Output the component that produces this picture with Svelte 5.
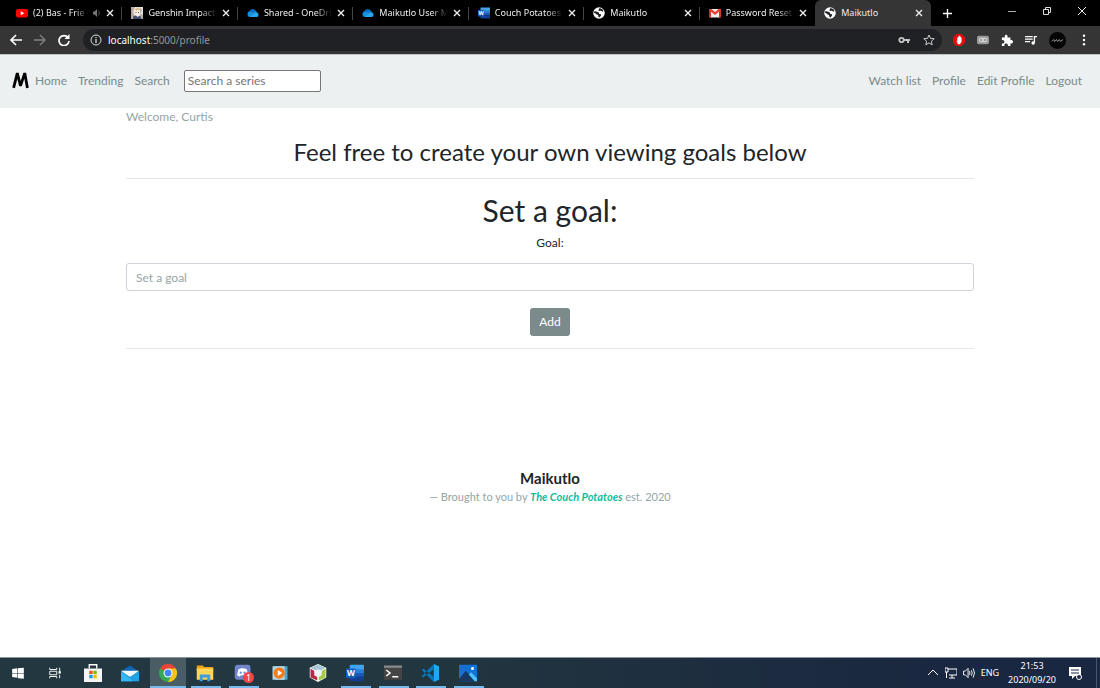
<script>
  const tabs = [
    { icon: 'youtube', title: '(2) Bas - Frie', audio: true },
    { icon: 'genshin', title: 'Genshin Impact-' },
    { icon: 'cloud', title: 'Shared - OneDri' },
    { icon: 'cloud', title: 'Maikutlo User M' },
    { icon: 'word', title: 'Couch Potatoes' },
    { icon: 'globe', title: 'Maikutlo' },
    { icon: 'gmail', title: 'Password Reset' },
    { icon: 'globe', title: 'Maikutlo', active: true }
  ];
  const apps = [
    { icon: 'start', name: 'Start' },
    { icon: 'taskview', name: 'Task View' },
    { icon: 'store', name: 'Store' },
    { icon: 'mail', name: 'Mail' },
    { icon: 'chrome', name: 'Chrome', running: true, active: true },
    { icon: 'folder', name: 'File Explorer', running: true },
    { icon: 'discord', name: 'Discord', running: true },
    { icon: 'player', name: 'Media Player' },
    { icon: 'cube', name: 'NetBeans' },
    { icon: 'word', name: 'Word', running: true },
    { icon: 'terminal', name: 'Terminal', running: true },
    { icon: 'code', name: 'Visual Studio Code', running: true },
    { icon: 'photos', name: 'Photos', running: true }
  ];
  let search = $state('');
  let goal = $state('');
</script>

{#snippet glyph(name)}
  <svg class="glyph" viewBox="0 0 24 24" aria-hidden="true">
    {#if name === 'youtube'}
      <rect x="0" y="4" width="24" height="17" rx="4" fill="#f00" />
      <path d="M9.5 8.5v8l7-4z" fill="#fff" />
    {:else if name === 'genshin'}
      <rect width="24" height="24" fill="#e9e2da" />
      <path d="M0 0h8L4 9l3 9-3 6H0zM17 1l5 5-3 7 5 3v8h-7l2-6z" fill="#b9aaa2" />
      <path d="M7 7l5-3 6 4-1 8-5 3-5-5z" fill="#fff4e7" />
      <path d="M5 18l5-1 3 3 5-3 3 7H4z" fill="#424d70" />
      <path d="M9 10h2v2H9zM14 10h2v2h-2z" fill="#51455c" />
      <path d="M8 5l6-4 5 5-5-1-3 3z" fill="#d9b783" />
    {:else if name === 'cloud'}
      <path d="M4 17a5 5 0 0 1 1-9 7 7 0 0 1 12-1l1 10z" fill="#0364b8" />
      <path d="M9 10l7-3a5 5 0 0 1 4 4l-8 4z" fill="#0f7bd0" />
      <path d="M5 20a5 5 0 0 1-2-9 6 6 0 0 1 8 0l10 7-3 2z" fill="#1490df" />
      <path d="M6 20l10-9a5 5 0 0 1 7 5 4 4 0 0 1-4 4z" fill="#28a8ea" />
    {:else if name === 'word'}
      <path d="M6 1h17a1 1 0 0 1 1 1v6H5V2z" fill="#41a5ee" />
      <path d="M5 7h19v5H5z" fill="#2b7cd3" />
      <path d="M5 12h19v5H5z" fill="#185abd" />
      <path d="M5 17h19v5a1 1 0 0 1-1 1H6a1 1 0 0 1-1-1z" fill="#103f91" />
      <rect x="0" y="6" width="13" height="13" rx="1" fill="#185abd" />
      <text x="6.5" y="16" text-anchor="middle" class="wordmark">W</text>
    {:else if name === 'globe'}
      <circle cx="12" cy="12" r="11.500" fill="#fff" />
      <path d="M3 8c3 0 4 2 7 2 3 1 1 3 3 4 2 0 4 0 3 3l-3 4c-3 0-2-3-3-5-1-1-4-1-5-3-1-1-2-1-3-1zM12 3c3-1 7 1 9 5-2 2-3 1-4 0-2-1-5 1-6-1-1-1 1-1 1-4z" fill="#202124" />
    {:else if name === 'gmail'}
      <path d="M2 4h20v17H2z" fill="#eee" />
      <path d="M0 4h4v17H0zM20 4h4v17h-4z" fill="#d93025" />
      <path d="M1 4h4l7 6 7-6h4v3l-11 9L1 7z" fill="#ea4335" />
    {:else if name === 'start'}
      <path d="M2 5l9-1v8H2zM12 4l10-1v9H12zM2 13h9v7l-9-1zM12 13h10v9l-10-1z" fill="#fff" />
    {:else if name === 'taskview'}
      <path d="M3 3v3h12V3M3 21v-3h12v3M3 9h12v6H3zM20 3v7M20 15v6" fill="none" stroke="#fff" stroke-width="1.6" />
      <path d="M18 9h4v4h-4z" fill="#fff" />
    {:else if name === 'store'}
      <path d="M7 6V1h10v5" fill="none" stroke="#fff" stroke-width="1.8" />
      <path d="M0 6h24v18H0z" fill="#f5f5f5" />
      <path d="M7 9h4.500v4.500H7z" fill="#f25022" /><path d="M12.500 9H17v4.500h-4.500z" fill="#7fba00" />
      <path d="M7 14.500h4.500V19H7z" fill="#00a4ef" /><path d="M12.500 14.500H17V19h-4.500z" fill="#ffb900" />
    {:else if name === 'mail'}
      <path d="M0 10L12 2l12 8v13H0z" fill="#1066b5" />
      <path d="M0 9h24l-12 9z" fill="#f2f8fc" />
      <path d="M0 10l12 7 12-7v13H0z" fill="#249fe3" /><path d="M0 10l16 13H0z" fill="#35b8f1" />
    {:else if name === 'chrome'}
      <circle cx="12" cy="12" r="12" fill="#34a853" />
      <path d="M12 12L1.600 6A12 12 0 0 1 22.400 6z" fill="#ea4335" />
      <path d="M12 6h10.400A12 12 0 0 1 12 24l5-9z" fill="#fbc116" />
      <circle cx="12" cy="12" r="6" fill="#fff" /><circle cx="12" cy="12" r="4.600" fill="#4285f4" />
    {:else if name === 'folder'}
      <path d="M1 2h8l2 2h12v5H1z" fill="#e8a317" />
      <path d="M1 6h22v15H1z" fill="#ffd65c" />
      <path d="M5 23v-9h14v9h-4v-5H9v5z" fill="#3e9ddd" />
    {:else if name === 'discord'}
      <rect x="1" y="1" width="21" height="20" rx="4" fill="#7185c8" />
      <path d="M6 7q5-3 11 0l2 8-4 2-1-2H9l-1 2-4-2z" fill="#fff" />
      <circle cx="9" cy="11.500" r="1.500" fill="#7185c8" /><circle cx="14" cy="11.500" r="1.500" fill="#7185c8" />
    {:else if name === 'player'}
      <path d="M8 3h14v18H8z" fill="#4fa2ca" /><path d="M5 3h13v18H5z" fill="#78bad5" />
      <path d="M2 3h16v18H2z" fill="#b7d6e2" />
      <circle cx="11" cy="12" r="7.500" fill="#f57c1a" /><path d="M9 8v8l6-4z" fill="#fff" />
    {:else if name === 'cube'}
      <path d="M12 0l11 5v13l-11 6-11-6V5z" fill="#fff" />
      <path d="M12 1l10 4-10 6L2 5z" fill="#a9c6d4" />
      <path d="M2 6l9 6v10l-9-4z" fill="#bb2848" /><path d="M22 6l-9 6v10l9-4z" fill="#a5cc40" />
      <path d="M12 7l5 2v6l-5 3-5-3V9z" fill="#eef3f5" />
    {:else if name === 'terminal'}
      <path d="M0 3h24v18H0z" fill="#454545" /><path d="M0 2h24v3H0z" fill="#8a8a8a" />
      <path d="M3 8l5 4-5 4M11 17h8" fill="none" stroke="#fff" stroke-width="2" />
    {:else if name === 'code'}
      <path d="M17 0l7 3v18l-7 3z" fill="#24a5ef" />
      <path d="M1 8l2-2 14 11v7zM1 16l2 2L17 7V0z" fill="#0877b9" />
    {:else if name === 'photos'}
      <rect x="0" y="1" width="24" height="22" fill="#1172d4" />
      <path d="M0 23v-3L9 9l13 14z" fill="#163a66" /><path d="M13 14l3-3 8 8v4h-3z" fill="#4fc3f7" />
      <circle cx="18" cy="6" r="2" fill="#fff" />
    {/if}
  </svg>
{/snippet}

<div class="screen">
  <header class="browser">
    <div class="strip">
      <div class="tabs">
        {#each tabs as tab}
          <div class="tab" class:active={tab.active}>
            {@render glyph(tab.icon)}
            <span class="title">{tab.title}</span>
            {#if tab.audio}
              <svg class="audio" viewBox="0 0 10 10" aria-hidden="true"><path d="M0 3h2l3-3v10L2 7H0z" fill="#777" /><path d="M7 2q2 3 0 6" fill="none" stroke="#666" /></svg>
            {/if}
            <button class="close" aria-label="Close tab"><svg viewBox="0 0 8 8"><path d="M1 1l6 6M7 1L1 7" stroke="#eee" stroke-width="1.400" /></svg></button>
          </div>
        {/each}
      </div>
      <button class="new" aria-label="New tab"><svg viewBox="0 0 10 10"><path d="M5 0v10M0 5h10" stroke="#fff" stroke-width="1.500" /></svg></button>
      <div class="window">
        <button aria-label="Minimize"><svg viewBox="0 0 8 8"><path d="M0 4.500h8" stroke="#aaa" /></svg></button>
        <button aria-label="Restore"><svg viewBox="0 0 8 8" fill="none" stroke="#ddd"><path d="M.5 2.500h5v5h-5zM2.500 2V.5h5v5H6" /></svg></button>
        <button aria-label="Close window"><svg viewBox="0 0 8 8"><path d="M0 0l8 8M8 0L0 8" stroke="#eee" /></svg></button>
      </div>
    </div>
    <div class="toolbar">
      <div class="history">
        <button aria-label="Back"><svg viewBox="0 0 12 12" fill="none" stroke="#fff" stroke-width="1.600"><path d="M12 6H1M6 1L1 6l5 5" /></svg></button>
        <button aria-label="Forward"><svg viewBox="0 0 12 12" fill="none" stroke="#818181" stroke-width="1.400"><path d="M0 6h11M6 1l5 5-5 5" /></svg></button>
        <button aria-label="Reload"><svg viewBox="0 0 12 12"><path d="M10 3.500A5 5 0 1 0 11 7" fill="none" stroke="#fff" stroke-width="1.700" /><path d="M11.500 0v5h-5z" fill="#fff" /></svg></button>
      </div>
      <div class="address">
        <svg class="info" viewBox="0 0 12 12"><circle cx="6" cy="6" r="5" fill="none" stroke="#ddd" /><path d="M6 5v4M6 3v1" stroke="#ddd" stroke-width="1.300" /></svg>
        <span class="url"><b>localhost</b>:5000/profile</span>
        <svg class="key" viewBox="0 0 12 12"><circle cx="3.500" cy="6" r="2.200" fill="none" stroke="#c4c4c4" stroke-width="1.800" /><path d="M6 6h6M10 6v3" stroke="#c4c4c4" stroke-width="2" /></svg>
        <svg class="star" viewBox="0 0 12 12"><path d="M6 1l1.500 3.400 3.700.3-2.800 2.500.8 3.600L6 8.900l-3.200 1.900.8-3.600L.8 4.700l3.700-.3z" fill="none" stroke="#ccc" /></svg>
      </div>
      <div class="extensions">
        <svg viewBox="0 0 14 14"><path d="M4 0h6l4 4v6l-4 4H4l-4-4V4z" fill="#e40d0d" /><path d="M3.500 7.500L5 9V4h1V3h1V2h1v1h1v1h1v5l-2 3H6z" fill="#fff" /></svg>
        <svg viewBox="0 0 14 14"><rect x="0" y="2" width="14" height="10" rx="2" fill="#999" /><rect x="3" y="5" width="4" height="4" rx="1" fill="none" stroke="#eee" /><rect x="7" y="5" width="4" height="4" rx="1" fill="none" stroke="#eee" /></svg>
        <svg viewBox="0 0 14 14"><path d="M1 4h3.500C3.500 0 8.500 0 7.500 4H11v3c4-1 4 5 0 4v3H8c1-4-5-4-4 0H1v-3c4 1 4-5 0-4z" fill="#fff" /></svg>
        <svg viewBox="0 0 14 14"><path d="M0 3h9M0 6h9M0 9h6M14 3h-3v7" fill="none" stroke="#fff" stroke-width="1.500" /><circle cx="9.500" cy="10.500" r="2" fill="#fff" /></svg>
        <svg class="avatar" viewBox="0 0 18 18"><circle cx="9" cy="9" r="9" fill="#050505" /><path d="M3 10l2-2 1 2 2-2 1 2 2-2 1 2 3-2" fill="none" stroke="#bbb" stroke-width=".8" /></svg>
        <svg viewBox="0 0 14 14" fill="#fff"><circle cx="7" cy="2" r="1.400" /><circle cx="7" cy="7" r="1.400" /><circle cx="7" cy="12" r="1.400" /></svg>
      </div>
    </div>
  </header>

  <nav class="navbar">
    <a class="brand" href="#home" aria-label="Maikutlo"><svg viewBox="0 0 16 16"><path d="M1.500 15L5 1l3 12 4-12 2.500 14" fill="none" stroke="#000" stroke-width="2.600" stroke-linejoin="bevel" /></svg></a>
    <a href="#home">Home</a>
    <a href="#trending">Trending</a>
    <a href="#search">Search</a>
    <input class="search" type="text" aria-label="Search a series" placeholder="Search a series" bind:value={search} />
    <div class="account">
      <a href="#watch">Watch list</a>
      <a href="#profile">Profile</a>
      <a href="#edit">Edit Profile</a>
      <a href="#logout">Logout</a>
    </div>
  </nav>

  <main>
    <p class="welcome">Welcome, Curtis</p>
    <h2>Feel free to create your own viewing goals below</h2>
    <form onsubmit={(e) => e.preventDefault()}>
      <h1>Set a goal:</h1>
      <label for="goal">Goal:</label>
      <input id="goal" type="text" placeholder="Set a goal" bind:value={goal} />
      <button type="submit">Add</button>
    </form>
    <footer>
      <strong>Maikutlo</strong>
      <p>— Brought to you by <em>The Couch Potatoes</em> est. 2020</p>
    </footer>
  </main>

  <div class="taskbar">
    {#each apps as app}
      <button class="app" class:running={app.running} class:active={app.active} aria-label={app.name}>
        {@render glyph(app.icon)}
        {#if app.icon === 'discord'}<span class="badge">1</span>{/if}
      </button>
    {/each}
    <div class="tray">
      <svg viewBox="0 0 12 12" fill="none" stroke="#fff"><path d="M1 8l5-5 5 5" /></svg>
      <svg viewBox="0 0 12 12" fill="none" stroke="#fff"><path d="M3 2h9v6H4M7 8v3M4 11h6M0 1h3v4H0zM1.500 5v6" /></svg>
      <svg viewBox="0 0 13 12" fill="none" stroke="#fff"><path d="M.5 4h2l3-3v10l-3-3h-2zM7 4q1 2 0 4M9 3q2 3 0 6M11 1q3 5 0 10" /></svg>
      <span>ENG</span>
      <div class="clock"><span>21:53</span><span>2020/09/20</span></div>
      <svg class="notice" viewBox="0 0 13 13"><path d="M0 0h12v9H6l-3 3V9H0z" fill="#fff" /><path d="M2 3h8M2 6h8" stroke="#1c2a43" /><circle cx="10" cy="10" r="2.500" fill="#1c2a43" stroke="#fff" /></svg>
    </div>
  </div>
</div>

<style>
  :global(body) { margin: 0; }
  .screen { min-height: 100vh; display: flex; flex-direction: column; background: #fff; font: 12px/18px Lato, sans-serif; color: #212529; }
  .screen :is(*, *::before, *::after) { box-sizing: border-box; }
  svg { display: block; flex: none; }
  button { border: 0; padding: 0; background: none; font: inherit; color: inherit; }
  a { text-decoration: none; color: inherit; }
  h1, h2, p { margin: 0; font-weight: 400; }

  .browser { font: 9px/14px "Noto Sans", sans-serif; color: #eee; }
  .strip { display: flex; align-items: center; height: 26px; padding-left: 7px; background: #000; }
  .tabs { display: flex; flex: none; width: 84.5%; height: 26px; }
  .tab { flex: 1 1 0; min-width: 0; display: flex; align-items: center; gap: 5px; padding: 0 8px 0 9px; position: relative; }
  .tab::after { content: ""; position: absolute; right: 0; top: 7px; height: 13px; width: 1px; background: #444; }
  .tab.active { background: #353535; border-radius: 6px 6px 0 0; }
  .tab.active::after, .tab:nth-last-child(2)::after { display: none; }
  .tab .glyph { width: 12px; height: 12px; }
  .title { flex: 1; min-width: 0; overflow: hidden; white-space: nowrap; mask-image: linear-gradient(to right, #000 75%, transparent); }
  .active .title { mask-image: none; }
  .audio { width: 8px; height: 8px; }
  .close svg { width: 8px; height: 8px; }
  .new { margin-left: 12px; }
  .new svg { width: 9px; height: 9px; }
  .window { display: flex; gap: 27px; margin-left: auto; padding: 0 14px 4px 0; }
  .window svg { width: 8px; height: 8px; }
  .toolbar { display: flex; align-items: center; height: 28px; padding: 0 10px; background: #353535; }
  .history { display: flex; gap: 12px; width: 73px; }
  .history svg { width: 12px; height: 12px; }
  .address { flex: 1; display: flex; align-items: center; height: 22px; padding: 0 7px; border-radius: 11px; background: #202124; }
  .info { width: 12px; height: 12px; margin-right: 6px; }
  .url { flex: 1; font-size: 10px; color: #949699; }
  .url b { font-weight: 400; color: #fff; }
  .key, .star { width: 12px; height: 12px; }
  .star { margin-left: 13px; }
  .extensions { display: flex; align-items: center; gap: 12px; padding-left: 11px; }
  .extensions svg { width: 12px; height: 12px; }
  .extensions .avatar { width: 17px; height: 17px; }

  .navbar { display: flex; align-items: center; height: 54px; padding: 0 18px 2px 12px; background: #ecf0f1; border-top: 1px solid #bfc3c4; color: #7b8a8b; }
  .navbar a { margin-right: 11px; }
  .navbar .brand { margin-right: 6px; }
  .brand svg { width: 17px; height: 17px; }
  .search { width: 137px; height: 22px; margin-left: 3px; padding: 0 3px; border: 1px solid #767676; border-radius: 2px; background: #fff; font: inherit; color: #222; }
  .search::placeholder { color: #757575; opacity: 1; }
  .account { margin-left: auto; display: flex; gap: 11px; }
  .navbar .account a { margin: 0; }

  main { flex: 1; width: 100%; max-width: 848px; margin: 0 auto; display: flex; flex-direction: column; }
  .welcome, footer p { color: #95a5a6; }
  h2 { padding: 9px 0 10px; border-bottom: 1px solid #e5e5e5; font-size: 24px; line-height: 33px; text-align: center; }
  form { display: flex; flex-direction: column; align-items: center; padding: 13px 0 12px; border-bottom: 1px solid #e8e8e8; }
  h1 { font-size: 30px; line-height: 36px; margin-bottom: 6px; }
  label { margin-bottom: 11px; }
  #goal { width: 100%; height: 28px; padding: 0 9px; border: 1px solid #ced4da; border-radius: 3px; font: inherit; color: #495057; }
  #goal::placeholder { color: #95a5a6; opacity: 1; }
  form button { margin-top: 17px; padding: 5px 9px; border-radius: 3px; background: #7b8a8b; color: #fff; }
  footer { padding: 119px 0 20px; text-align: center; }
  footer strong { display: block; font-size: 15px; line-height: 20px; }
  footer p { font-size: 11px; }
  footer em { font-weight: 700; color: #18bc9c; }

  .taskbar { display: flex; height: 31px; border-top: 1px solid #89969c; background: linear-gradient(90deg, #22373f 0%, #22373f 35%, #1a2740 85%, #1a2740 100%); color: #fff; font: 9px/14px "Noto Sans", sans-serif; }
  .app { position: relative; display: flex; align-items: center; justify-content: center; width: 36px; margin-right: 1px; }
  .app:nth-child(even) { margin-right: 2px; }
  .app.running::after { content: ""; position: absolute; left: 4px; right: 2px; bottom: 0; height: 2px; background: #76b9ed; }
  .app.active { background: #4b5d64; }
  .app.active::after { left: 0; right: 0; }
  .app .glyph { width: 18px; height: 18px; }
  .app:nth-child(-n + 2) .glyph { width: 14px; height: 14px; }
  .badge { position: absolute; right: 7px; bottom: 5px; width: 11px; height: 11px; border-radius: 6px; background: #f04747; line-height: 11px; text-align: center; }
  .tray { margin-left: auto; display: flex; align-items: center; gap: 6px; }
  .tray::after { content: ""; align-self: stretch; width: 1px; margin-right: 3px; background: #4c566b; }
  .tray > svg { width: 12px; height: 12px; }
  .tray .notice { width: 13px; height: 13px; margin: 0 8px 0 7px; }
  .clock { display: flex; flex-direction: column; align-items: center; margin-left: 3px; }
  .wordmark { font: 700 11px "Noto Sans", sans-serif; fill: #fff; }
</style>
